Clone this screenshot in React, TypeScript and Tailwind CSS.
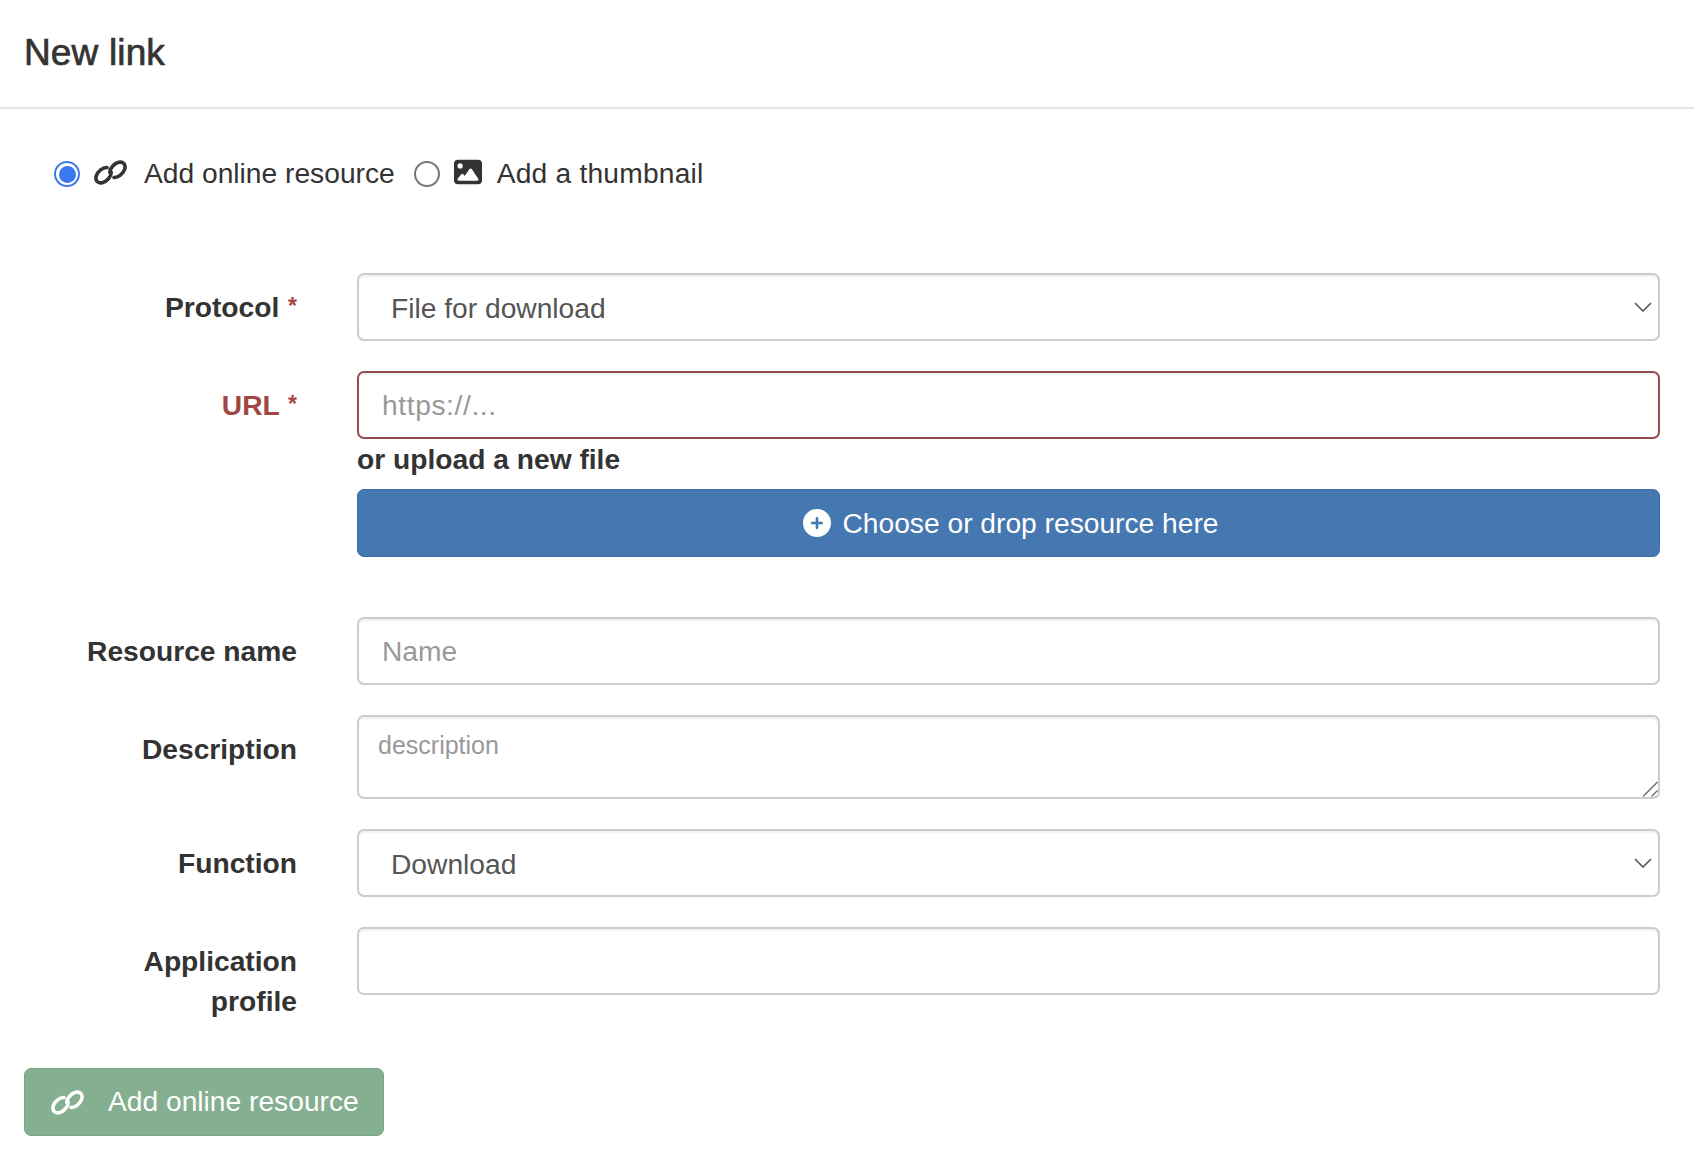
import React from "react";
import { FaImage, FaCirclePlus } from "react-icons/fa6";

const font = "font-['Liberation_Sans',Arial,sans-serif]";
const field =
  "block w-full h-[68px] rounded-[7px] border-2 border-[#ccc] bg-white text-[#555] text-[28.2px] outline-none placeholder:text-[#999] shadow-[inset_0_2px_2px_rgba(0,0,0,0.06)]";
const label = "text-[28.2px] leading-[40px] font-bold text-[#333] text-right w-[273px] shrink-0 pt-[14px]";

function LinkIcon({ className }: { className: string }) {
  return (
    <svg viewBox="0 0 33 25" className={className} fill="none" stroke="currentColor" strokeWidth="3.6" strokeLinecap="round">
      <path d="M17.24 12.42A9 6 -45 1 1 12.99 7.57" />
      <path d="M15.76 12.58A9 6 -45 1 1 20.01 17.43" />
    </svg>
  );
}

function Star() {
  return <span className="text-[#a94442] text-[23px] leading-none font-bold align-[3px] ml-[1px]">*</span>;
}

function Select({ value }: { value: string }) {
  return (
    <div className="relative">
      <select className={`${field} appearance-none pl-[32px] pr-10 pt-[3px]`} defaultValue={value}>
        <option>{value}</option>
      </select>
      <svg
        viewBox="0 0 18 10"
        className="absolute right-[8px] top-[29px] w-[18px] h-[10px] pointer-events-none"
        fill="none"
        stroke="#555"
        strokeWidth="1.6"
      >
        <path d="M1 1l8 8 8-8" />
      </svg>
    </div>
  );
}

export default function App() {
  return (
    <div className={`${font} w-[1694px] h-[1162px] bg-white text-[#333] overflow-hidden`}>
      <header className="h-[109px] border-b-2 border-[#e5e5e5] pl-6 pt-[32px]">
        <h1 className="text-[37px] leading-[42px] tracking-[0.15px] [-webkit-text-stroke:0.7px_#333]">New link</h1>
      </header>

      <div className="flex items-center h-[40px] mt-[45px] ml-[54px] text-[28.2px]">
        <span className="w-[26px] h-[26px] rounded-full border-2 border-[#3b78f0] flex items-center justify-center">
          <span className="w-[17px] h-[17px] rounded-full bg-[#3b78f0]" />
        </span>
        <LinkIcon className="ml-[14px] mb-[4px] w-[33px] h-[25px] text-[#333]" />
        <span className="ml-[17px] pb-[2px]">Add online resource</span>
        <span className="ml-[19px] w-[26px] h-[26px] rounded-full border-2 border-[#767676]" />
        <FaImage className="ml-[14px] mb-[4px] w-[28px] h-[28px] text-[#333]" />
        <span className="ml-[15px] pb-[2px] tracking-[0.2px]">Add a thumbnail</span>
      </div>

      <div className="mt-[79px] pl-6 pr-[34px]">
        <div className="flex gap-[60px]">
          <div className={label}>
            Protocol <Star />
          </div>
          <div className="grow">
            <Select value="File for download" />
          </div>
        </div>

        <div className="flex gap-[60px] mt-[30px]">
          <div className={`${label} !text-[#a04745]`}>
            URL <Star />
          </div>
          <div className="grow">
            <input
              className={`${field} !border-[#944c4c] px-[23px] placeholder:tracking-[0.6px]`}
              placeholder="https://..."
            />
            <div className="text-[28.2px] leading-[40px] font-bold">or upload a new file</div>
            <button className="w-full h-[68px] mt-[10px] pl-[5px] rounded-[7px] bg-[#4577b1] border border-[#3f6ea6] text-white text-[28.2px] flex items-center justify-center gap-[11px]">
              <FaCirclePlus className="w-[28px] h-[28px]" />
              Choose or drop resource here
            </button>
          </div>
        </div>

        <div className="flex gap-[60px] mt-[60px]">
          <div className={label}>Resource name</div>
          <div className="grow">
            <input className={`${field} px-[23px] pt-[1px]`} placeholder="Name" />
          </div>
        </div>

        <div className="flex gap-[60px] mt-[30px]">
          <div className={label}>Description</div>
          <div className="grow relative">
            <textarea
              className={`${field} !h-[84px] !text-[25px] px-[19px] py-[10px] resize-none`}
              placeholder="description"
            />
            <svg viewBox="0 0 16 16" className="absolute right-[2px] bottom-[2px] w-[16px] h-[16px]" stroke="#666" strokeWidth="1.3" fill="none">
              <path d="M1 15.5L15.5 1M9.5 15.5L15.5 9.5" />
            </svg>
          </div>
        </div>

        <div className="flex gap-[60px] mt-[30px]">
          <div className={label}>Function</div>
          <div className="grow">
            <Select value="Download" />
          </div>
        </div>

        <div className="flex gap-[60px] mt-[30px]">
          <div className={label}>
            Application
            <br />
            profile
          </div>
          <div className="grow">
            <input className={field} />
          </div>
        </div>

        <button className="mt-[47px] w-[360px] h-[68px] rounded-[7px] bg-[#84af90] border border-[#7aa587] text-white text-[28.2px] flex items-center pl-[26px]">
          <LinkIcon className="w-[33px] h-[25px]" />
          <span className="ml-[24px] pb-[2px]">Add online resource</span>
        </button>
      </div>
    </div>
  );
}
